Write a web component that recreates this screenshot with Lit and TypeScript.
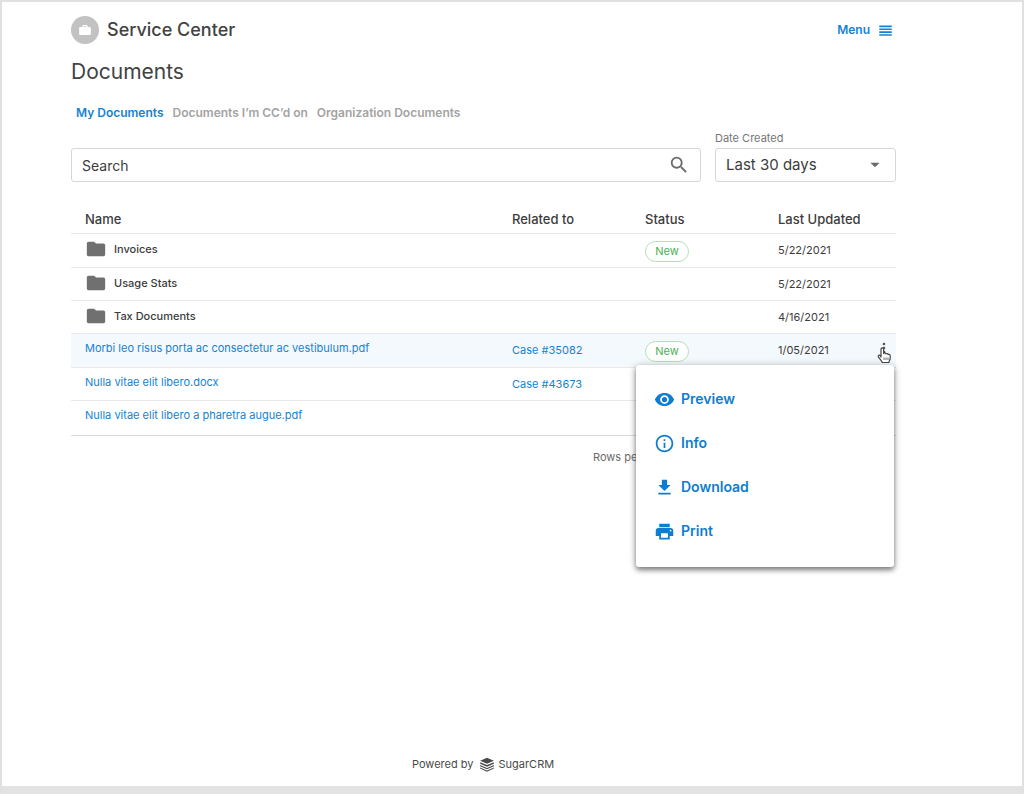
import { LitElement, html, css, svg, nothing } from "lit";
import { customElement, property, state } from "lit/decorators.js";

interface DocumentRow {
  name: string;
  folder?: boolean;
  related?: string;
  status?: string;
  updated?: string;
  active?: boolean;
}

const ROWS: DocumentRow[] = [
  { name: "Invoices", folder: true, status: "New", updated: "5/22/2021" },
  { name: "Usage Stats", folder: true, updated: "5/22/2021" },
  { name: "Tax Documents", folder: true, updated: "4/16/2021" },
  {
    name: "Morbi leo risus porta ac consectetur ac vestibulum.pdf",
    related: "Case #35082",
    status: "New",
    updated: "1/05/2021",
    active: true,
  },
  { name: "Nulla vitae elit libero.docx", related: "Case #43673" },
  { name: "Nulla vitae elit libero a pharetra augue.pdf" },
];

const TABS = ["My Documents", "Documents I’m CC’d on", "Organization Documents"];

const ICONS: Record<string, unknown> = {
  briefcase: svg`<path d="M20.500 7H16.500V5.500C16.500 4.100 15.900 3.500 14.500 3.500h-5C8.100 3.500 7.500 4.100 7.500 5.500V7H3.500C2.500 7 2 7.500 2 8.500V19c0 1 .5 1.500 1.500 1.500h17c1 0 1.500-.5 1.500-1.500V8.500c0-1-.5-1.500-1.500-1.500zM14.500 7h-5V5.500h5z"/>`,
  menu: svg`<path d="M2 4h20v2.600H2zM2 8.600h20v2.600H2zM2 13.200h20v2.600H2zM2 17.800h20v2.600H2z"/>`,
  search: svg`<path d="M15.500 14h-.79l-.28-.27A6.471 6.471 0 0 0 16 9.500 6.500 6.500 0 1 0 9.500 16c1.610 0 3.090-.59 4.230-1.570l.27.28v.79l5 4.990L20.490 19l-4.990-5zm-6 0C7.010 14 5 11.990 5 9.500S7.010 5 9.500 5 14 7.010 14 9.500 11.990 14 9.500 14z"/>`,
  arrow: svg`<path d="M4 8h16l-8 8z"/>`,
  folder: svg`<path d="M10 4H4c-1.100 0-1.990.9-1.990 2L2 18c0 1.100.9 2 2 2h16c1.100 0 2-.9 2-2V8c0-1.100-.9-2-2-2h-8l-2-2z"/>`,
  more: svg`<path d="M12 8a2 2 0 1 0 0-4 2 2 0 0 0 0 4zm0 2a2 2 0 1 0 0 4 2 2 0 0 0 0-4zm0 6a2 2 0 1 0 0 4 2 2 0 0 0 0-4z"/>`,
  preview: svg`<path d="M12 4.500C7 4.500 2.730 7.610 1 12c1.730 4.390 6 7.500 11 7.500s9.270-3.110 11-7.500c-1.730-4.390-6-7.500-11-7.500zM12 17a5 5 0 1 1 0-10 5 5 0 0 1 0 10zm0-8a3 3 0 1 0 0 6 3 3 0 0 0 0-6z"/>`,
  info: svg`<path d="M11 7h2v2h-2zm0 4h2v6h-2zm1-9C6.480 2 2 6.480 2 12s4.480 10 10 10 10-4.480 10-10S17.520 2 12 2zm0 18c-4.410 0-8-3.590-8-8s3.590-8 8-8 8 3.590 8 8-3.590 8-8 8z"/>`,
  download: svg`<path d="M19 9h-4V3H9v6H5l7 7 7-7zM5 18v2h14v-2H5z"/>`,
  print: svg`<path d="M19 8H5c-1.660 0-3 1.340-3 3v6h4v4h12v-4h4v-6c0-1.660-1.340-3-3-3zm-3 11H8v-5h8v5zm3-7c-.55 0-1-.45-1-1s.45-1 1-1 1 .45 1 1-.45 1-1 1zm-1-9H6v4h12V3z"/>`,
  stack: svg`<path d="M12 1l11 4.800-11 4.800L1 5.800z"/><path d="M1 8.200l11 4.700 11-4.700v2.600l-11 4.700-11-4.700z"/><path d="M1 12.800l11 4.700 11-4.700v2l-11 4.700-11-4.700z"/><path d="M1 16.800l11 4.700 11-4.700v1.600L12 23.400 1 18.400z"/>`,
};

@customElement("ui-icon")
export class UiIcon extends LitElement {
  @property() name = "";

  static styles = css`
    :host {
      display: inline-flex;
      flex: none;
      width: 24px;
      height: 24px;
    }
    .glyph {
      width: 100%;
      height: 100%;
      fill: currentColor;
    }
  `;

  render() {
    return html`<svg class="glyph" viewBox="0 0 24 24" aria-hidden="true">${ICONS[this.name]}</svg>`;
  }
}

@customElement("row-menu")
export class RowMenu extends LitElement {
  static styles = css`
    :host {
      display: block;
      box-sizing: border-box;
      width: 258px;
      padding: 12px 0 14px;
      border-radius: 3px;
      background: #fff;
      box-shadow: 0 3px 5px rgba(0, 0, 0, 0.42), 0 1px 8px rgba(0, 0, 0, 0.24);
    }
    .item {
      display: flex;
      align-items: center;
      gap: 6px;
      width: 100%;
      height: 44px;
      padding: 0 18px;
      border: 0;
      background: none;
      color: #0e7dd0;
      font: 600 14px/20px Inter, "Liberation Sans", sans-serif;
      text-align: left;
      cursor: pointer;
    }
    .icon {
      width: 21px;
      height: 21px;
    }
  `;

  render() {
    return html`${["Preview", "Info", "Download", "Print"].map(
      (label) => html`
        <button class="item" role="menuitem">
          <ui-icon class="icon" name=${label.toLowerCase()}></ui-icon>${label}
        </button>
      `
    )}`;
  }
}

@customElement("app-root")
export class AppRoot extends LitElement {
  @state() private tab = 0;
  @state() private menuOpen = true;

  static styles = css`
    :host {
      display: flex;
      flex-direction: column;
      box-sizing: border-box;
      min-height: 100vh;
      padding: 12px 126px 12px 69px;
      border: 2px solid #e0e0e0;
      border-bottom: 8px solid #e3e3e3;
      background: #fff;
      color: #3c3c3c;
      font: 400 11px/20px Inter, "Liberation Sans", sans-serif;
    }
    .header {
      display: flex;
      align-items: center;
      justify-content: space-between;
      height: 32px;
    }
    .brand {
      display: flex;
      align-items: center;
      gap: 8px;
      color: #424242;
      font-size: 18px;
      font-weight: 500;
    }
    .logo {
      display: flex;
      align-items: center;
      justify-content: center;
      width: 28px;
      height: 28px;
      border-radius: 50%;
      background: #c2c2c2;
      color: #fff;
    }
    .logo-icon {
      width: 14px;
      height: 14px;
    }
    .menu-button {
      display: flex;
      align-items: center;
      gap: 8px;
      padding: 0 3px;
      border: 0;
      background: none;
      color: #1682d2;
      font: 600 12px/20px Inter, "Liberation Sans", sans-serif;
      cursor: pointer;
    }
    .menu-icon {
      width: 15px;
      height: 15px;
    }
    .title {
      margin: 12px 0 0;
      color: #424242;
      font-size: 21px;
      font-weight: 400;
      line-height: 28px;
    }
    .tabs {
      display: flex;
      gap: 9px;
      margin-top: 17px;
      padding-left: 5px;
    }
    .tab {
      padding: 0;
      border: 0;
      background: none;
      color: #a3a3a3;
      font: 600 12px/20px Inter, "Liberation Sans", sans-serif;
      cursor: pointer;
    }
    .tab.selected {
      color: #1682d2;
    }
    .filters {
      display: grid;
      grid-template-columns: 1fr 181px;
      align-items: end;
      gap: 14px;
      margin-top: 5px;
    }
    .field {
      display: grid;
      color: #757575;
    }
    .box {
      display: grid;
      align-items: center;
      height: 34px;
      box-sizing: border-box;
      border: 1px solid #d6d6d6;
      border-radius: 3px;
      color: #6b6b6b;
    }
    .control {
      grid-area: 1 / 1;
      box-sizing: border-box;
      width: 100%;
      height: 32px;
      padding: 0 36px 0 10px;
      border: 0;
      outline: 0;
      appearance: none;
      background: none;
      color: #3c3c3c;
      font: 400 14px/20px Inter, "Liberation Sans", sans-serif;
    }
    select.control {
      font-size: 15px;
    }
    .control::placeholder {
      color: #3c3c3c;
      opacity: 1;
    }
    .box-icon {
      grid-area: 1 / 1;
      justify-self: end;
      margin-right: 10px;
      width: 22px;
      height: 22px;
      pointer-events: none;
    }
    .box-icon.small {
      margin-right: 13px;
      width: 14px;
      height: 14px;
    }
    .table {
      width: 100%;
      margin-top: 22px;
      border-collapse: separate;
      border-spacing: 0;
      table-layout: fixed;
    }
    .col-mid {
      width: 133px;
    }
    .col-date {
      width: 102px;
    }
    .col-actions {
      width: 30px;
    }
    .head {
      height: 29px;
      padding: 0 0 0 14px;
      border-bottom: 1px solid #e6e6e6;
      font-size: 13px;
      font-weight: 500;
      text-align: left;
      white-space: nowrap;
    }
    .cell {
      height: 33px;
      box-sizing: border-box;
      padding: 6px 0 0 14px;
      border-bottom: 1px solid #e9e9e9;
      vertical-align: top;
    }
    .cell.name {
      padding-top: 4px;
    }
    .cell.tagged {
      padding: 7px 0 5px 14px;
    }
    .row.active .cell {
      background: #f4f9fd;
    }
    .row:last-child .cell {
      height: 35px;
      border-bottom-color: #dcdcdc;
    }
    .folder {
      display: flex;
      align-items: center;
      gap: 7px;
      font-weight: 500;
    }
    .folder-icon {
      width: 22px;
      height: 22px;
      color: #707070;
    }
    .link {
      color: #1682d2;
      text-decoration: none;
    }
    .badge {
      display: block;
      box-sizing: border-box;
      width: 44px;
      height: 21px;
      border: 1px solid #b5dfb9;
      border-radius: 11px;
      background: #fff;
      color: #4db056;
      line-height: 19px;
      text-align: center;
    }
    .cell.actions {
      position: relative;
      padding: 4px 0 0 8px;
    }
    .more {
      display: flex;
      justify-content: center;
      align-items: center;
      width: 20px;
      height: 20px;
      padding: 0;
      border: 0;
      background: none;
      color: #555;
      cursor: pointer;
    }
    .more-icon {
      width: 16px;
      height: 16px;
    }
    .pointer {
      position: absolute;
      z-index: 3;
      top: 12px;
      right: 4px;
      width: 16px;
      height: 18px;
      pointer-events: none;
    }
    .popup {
      position: absolute;
      z-index: 2;
      top: calc(100% - 2px);
      right: 2px;
    }
    .pager {
      margin: 11px 0 0;
      padding-left: 522px;
      color: #6b6b6b;
    }
    .footer {
      display: flex;
      align-items: center;
      gap: 6px;
      margin: auto 0 0;
      padding-left: 341px;
      color: #4a4a4a;
    }
    .vendor {
      display: flex;
      align-items: center;
      gap: 3px;
    }
    .stack-icon {
      width: 16px;
      height: 15px;
    }
  `;

  private renderRow(row: DocumentRow) {
    return html`
      <tr class="row ${row.active ? "active" : ""}">
        <td class="cell name">
          ${row.folder
            ? html`<span class="folder"><ui-icon class="folder-icon" name="folder"></ui-icon>${row.name}</span>`
            : html`<a class="link" href="#">${row.name}</a>`}
        </td>
        <td class="cell">${row.related ? html`<a class="link" href="#">${row.related}</a>` : nothing}</td>
        <td class="cell ${row.status ? "tagged" : ""}">
          ${row.status ? html`<span class="badge">${row.status}</span>` : nothing}
        </td>
        <td class="cell">${row.updated ?? nothing}</td>
        <td class="cell actions">
          ${row.active
            ? html`
                <button class="more" aria-label="Actions" @click=${() => (this.menuOpen = !this.menuOpen)}>
                  <ui-icon class="more-icon" name="more"></ui-icon>
                </button>
                <svg class="pointer" viewBox="0 0 16 18" aria-hidden="true">
                  <path
                    d="M5 11V3.200C5 1.300 7.600 1.300 7.600 3.200V7.400C8.200 6.600 9.800 6.800 10 7.900C10.700 7.200 12 7.500 12.200 8.600C13 8 14.200 8.500 14.200 9.800V12.200C14.200 14 12.900 14.800 12.900 16.500H6.200C5.900 14.600 3.600 13 2.300 10.600C1.700 9.300 3.200 8.600 4 9.500Z"
                    fill="#fff"
                    stroke="#444"
                    stroke-width="1.200"
                    stroke-linejoin="round"
                  />
                  <path d="M8 11.500v2.500M10 11.500v2.500M12 11.500v2.500" stroke="#444" stroke-width=".8" />
                </svg>
                ${this.menuOpen ? html`<row-menu class="popup" role="menu"></row-menu>` : nothing}
              `
            : nothing}
        </td>
      </tr>
    `;
  }

  render() {
    return html`
      <header class="header">
        <div class="brand">
          <span class="logo"><ui-icon class="logo-icon" name="briefcase"></ui-icon></span>
          Service Center
        </div>
        <button class="menu-button">Menu <ui-icon class="menu-icon" name="menu"></ui-icon></button>
      </header>
      <h1 class="title">Documents</h1>
      <nav class="tabs">
        ${TABS.map(
          (label, i) => html`
            <button class="tab ${i === this.tab ? "selected" : ""}" @click=${() => (this.tab = i)}>${label}</button>
          `
        )}
      </nav>
      <div class="filters">
        <div class="box">
          <input class="control" type="text" placeholder="Search" aria-label="Search" />
          <ui-icon class="box-icon" name="search"></ui-icon>
        </div>
        <div class="field">
          <label for="created">Date Created</label>
          <div class="box">
            <select class="control" id="created">
              <option>Last 30 days</option>
            </select>
            <ui-icon class="box-icon small" name="arrow"></ui-icon>
          </div>
        </div>
      </div>
      <table class="table">
        <colgroup>
          <col />
          <col class="col-mid" />
          <col class="col-mid" />
          <col class="col-date" />
          <col class="col-actions" />
        </colgroup>
        <thead>
          <tr>
            <th class="head">Name</th>
            <th class="head">Related to</th>
            <th class="head">Status</th>
            <th class="head" colspan="2">Last Updated</th>
          </tr>
        </thead>
        <tbody>
          ${ROWS.map((row) => this.renderRow(row))}
        </tbody>
      </table>
      <p class="pager">Rows per page</p>
      <footer class="footer">
        Powered by
        <span class="vendor"><ui-icon class="stack-icon" name="stack"></ui-icon>SugarCRM</span>
      </footer>
    `;
  }
}
